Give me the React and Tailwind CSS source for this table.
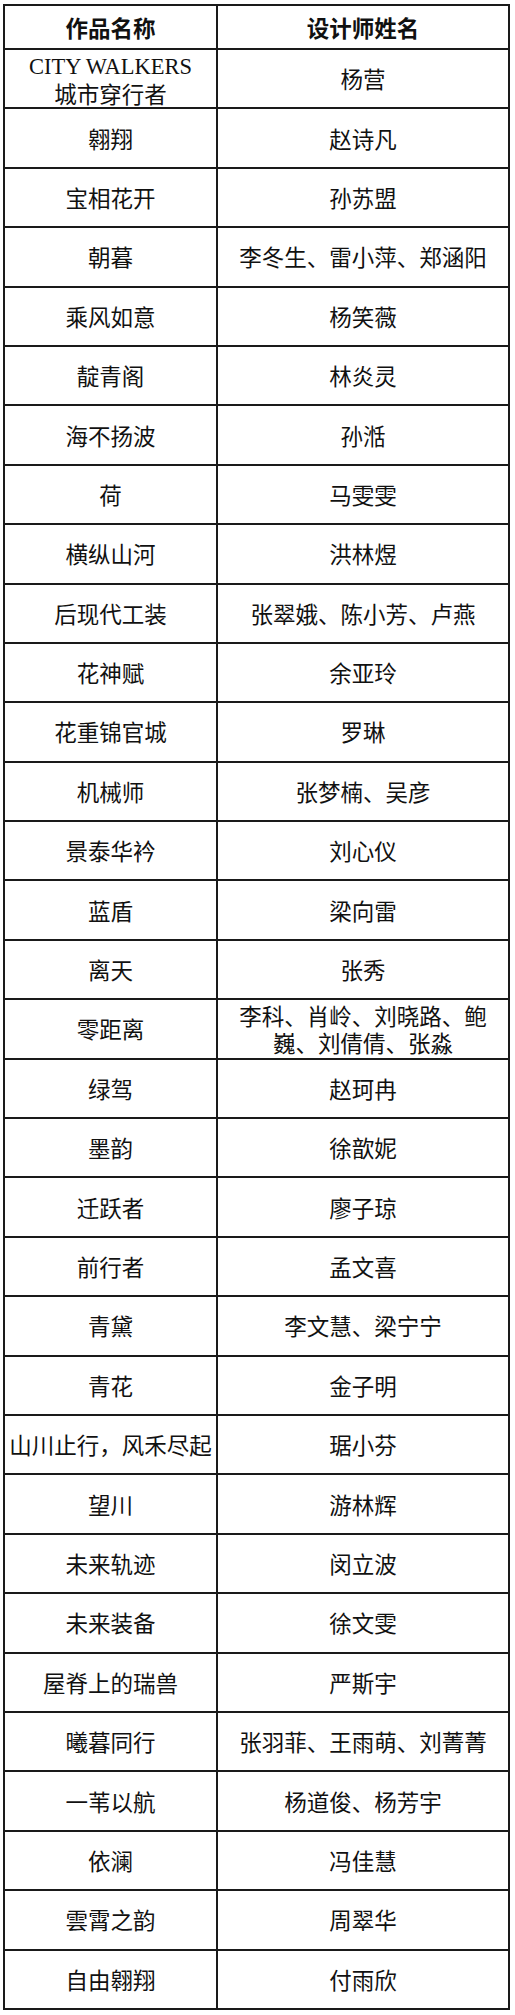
import React from "react";

const rows = [
  [
    <>
      <span style={{ fontFamily: '"Liberation Serif", serif' }}>CITY WALKERS</span>
      <br />
      城市穿行者
    </>,
    "杨营",
  ],
  ["翱翔", "赵诗凡"],
  ["宝相花开", "孙苏盟"],
  ["朝暮", "李冬生、雷小萍、郑涵阳"],
  ["乘风如意", "杨笑薇"],
  ["靛青阁", "林炎灵"],
  ["海不扬波", "孙湉"],
  ["荷", "马雯雯"],
  ["横纵山河", "洪林煜"],
  ["后现代工装", "张翠娥、陈小芳、卢燕"],
  ["花神赋", "余亚玲"],
  ["花重锦官城", "罗琳"],
  ["机械师", "张梦楠、吴彦"],
  ["景泰华衿", "刘心仪"],
  ["蓝盾", "梁向雷"],
  ["离天", "张秀"],
  [
    "零距离",
    <>
      李科、肖岭、刘晓路、鲍
      <br />
      巍、刘倩倩、张淼
    </>,
  ],
  ["绿驾", "赵珂冉"],
  ["墨韵", "徐歆妮"],
  ["迁跃者", "廖子琼"],
  ["前行者", "孟文喜"],
  ["青黛", "李文慧、梁宁宁"],
  ["青花", "金子明"],
  ["山川止行，风禾尽起", "琚小芬"],
  ["望川", "游林辉"],
  ["未来轨迹", "闵立波"],
  ["未来装备", "徐文雯"],
  ["屋脊上的瑞兽", "严斯宇"],
  ["曦暮同行", "张羽菲、王雨萌、刘菁菁"],
  ["一苇以航", "杨道俊、杨芳宇"],
  ["依澜", "冯佳慧"],
  ["雲霄之韵", "周翠华"],
  ["自由翱翔", "付雨欣"],
];

export default function App() {
  return (
    <div
      className="w-[515px] h-[2015px] bg-white pt-[4px] pl-[3px]"
      style={{ fontFamily: '"Noto Sans CJK SC", "Noto Sans", sans-serif' }}
    >
      <div className="w-[507px] border-2 border-[#1a1a1a] text-[#111] text-[22.5px] leading-[27px]">
        <div className="grid grid-cols-[213px_1fr] h-[42px] font-bold">
          <div className="flex items-center justify-center border-r-2 border-[#1a1a1a]">作品名称</div>
          <div className="flex items-center justify-center">设计师姓名</div>
        </div>
        {rows.map((r, i) => (
          <div key={i} className="grid grid-cols-[213px_1fr] h-[59.4px] border-t-2 border-[#1a1a1a]">
            <div className="flex items-center justify-center text-center border-r-2 border-[#1a1a1a] whitespace-nowrap">
              <div>{r[0]}</div>
            </div>
            <div className="flex items-center justify-center text-center whitespace-nowrap">
              <div>{r[1]}</div>
            </div>
          </div>
        ))}
      </div>
    </div>
  );
}
